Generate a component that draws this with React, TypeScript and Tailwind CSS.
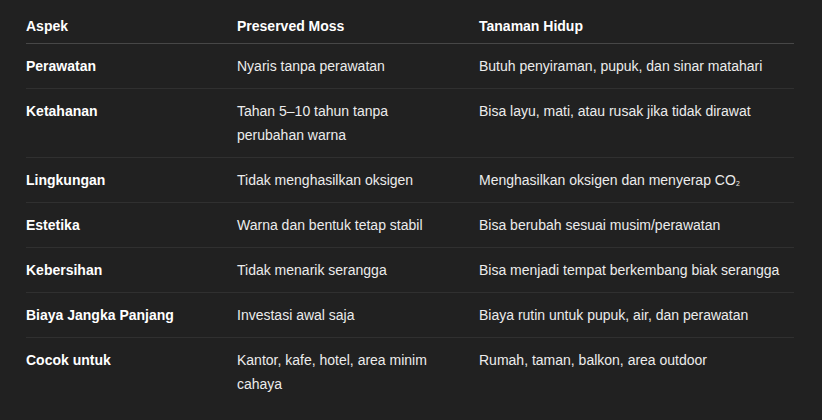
const ROWS: [string, string, React.ReactNode][] = [
  ['Perawatan', 'Nyaris tanpa perawatan', 'Butuh penyiraman, pupuk, dan sinar matahari'],
  ['Ketahanan', 'Tahan 5–10 tahun tanpa perubahan\u00a0warna', 'Bisa layu, mati, atau rusak jika tidak dirawat'],
  [
    'Lingkungan',
    'Tidak menghasilkan oksigen',
    <>
      Menghasilkan oksigen dan menyerap CO<span className="text-[11px] leading-none">₂</span>
    </>,
  ],
  ['Estetika', 'Warna dan bentuk tetap stabil', 'Bisa berubah sesuai musim/perawatan'],
  ['Kebersihan', 'Tidak menarik serangga', 'Bisa menjadi tempat berkembang biak serangga'],
  ['Biaya Jangka Panjang', 'Investasi awal saja', 'Biaya rutin untuk pupuk, air, dan perawatan'],
  ['Cocok untuk', 'Kantor, kafe, hotel, area minim cahaya', 'Rumah, taman, balkon, area outdoor'],
]

export default function App() {
  return (
    <div
      className="w-[822px] h-[420px] bg-[#212121] pl-[26px] text-[14px] leading-6 text-[#ececec] overflow-hidden"
      style={{ fontFamily: '"Liberation Sans", Arial, sans-serif' }}
    >
      <table className="w-[768px] table-fixed border-collapse text-left">
        <colgroup>
          <col className="w-[211px]" />
          <col className="w-[242px]" />
          <col className="w-[315px]" />
        </colgroup>
        <thead>
          <tr className="border-b border-[#474747]">
            {['Aspek', 'Preserved Moss', 'Tanaman Hidup'].map((h) => (
              <th key={h} className="pt-[14px] pb-[5px] pr-4 last:pr-0 font-semibold text-white align-top">
                {h}
              </th>
            ))}
          </tr>
        </thead>
        <tbody>
          {ROWS.map(([a, b, c], i) => (
            <tr key={a} className={i < ROWS.length - 1 ? 'border-b border-[#303030]' : ''}>
              <td className="py-[10px] pr-4 font-semibold text-white align-top">{a}</td>
              <td className="py-[10px] pr-4 align-top">{b}</td>
              <td className="py-[10px] align-top">{c}</td>
            </tr>
          ))}
        </tbody>
      </table>
    </div>
  )
}
